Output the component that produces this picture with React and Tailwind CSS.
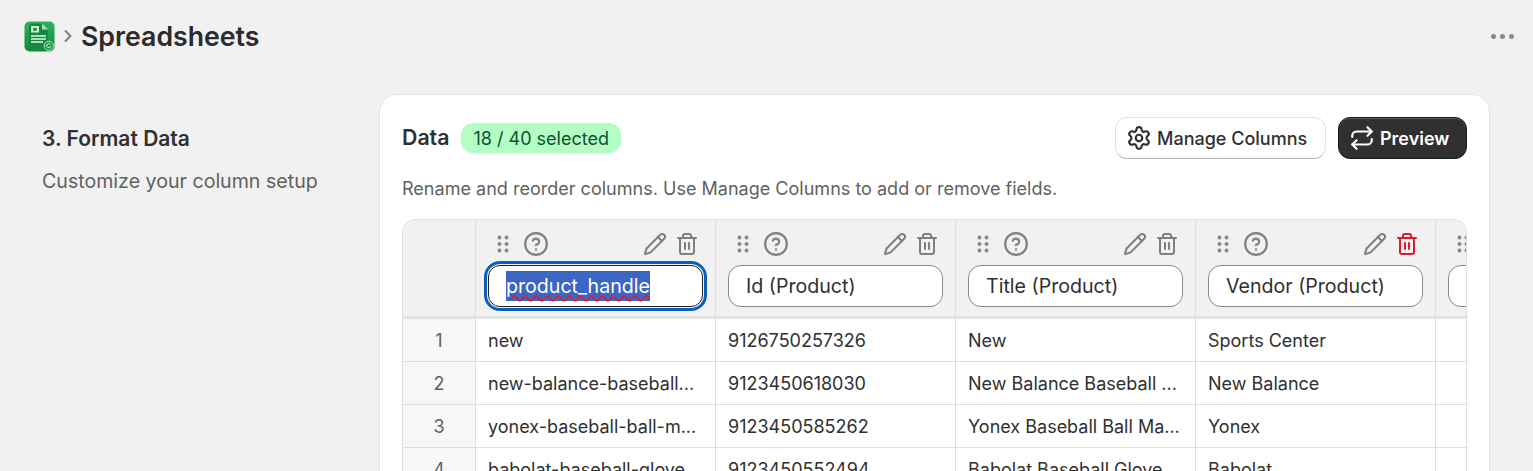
import React from "react";
import { Settings, Repeat, Pencil, Trash2, CircleHelp, ChevronRight } from "lucide-react";

const columns = [
  { label: "product_handle", selected: true, cells: ["new", "new-balance-baseball...", "yonex-baseball-ball-m...", "babolat-baseball-glove..."] },
  { label: "Id (Product)", cells: ["9126750257326", "9123450618030", "9123450585262", "9123450552494"] },
  { label: "Title (Product)", cells: ["New", "New Balance Baseball ...", "Yonex Baseball Ball Ma...", "Babolat Baseball Glove..."] },
  { label: "Vendor (Product)", danger: true, cells: ["Sports Center", "New Balance", "Yonex", "Babolat"] },
  { label: "", cells: ["", "", "", ""] },
];

const Logo = () => (
  <svg width="31" height="31" viewBox="0 0 31 31" className="shrink-0">
    <defs>
      <linearGradient id="logoBg" x1="0" y1="0" x2="0" y2="1">
        <stop offset="0" stopColor="#2fb457" />
        <stop offset="1" stopColor="#128a3c" />
      </linearGradient>
    </defs>
    <rect x="0.5" y="0.5" width="30" height="30" rx="5" fill="url(#logoBg)" />
    <path d="M7 2.5h11l6 6v17a2 2 0 0 1-2 2H7a2 2 0 0 1-2-2v-21a2 2 0 0 1 2-2z" fill="#138a3f" />
    <path d="M18 2.5l6 6h-6z" fill="#a5e0b8" />
    <rect x="7" y="5" width="8" height="6.5" fill="#d8f2e0" />
    <rect x="9.2" y="6.8" width="3.6" height="3" fill="#138a3f" />
    <rect x="7" y="14.2" width="15" height="1.6" fill="#d8f2e0" />
    <rect x="7" y="17.2" width="15" height="1.6" fill="#d8f2e0" />
    <rect x="7" y="20.2" width="12" height="1.6" fill="#d8f2e0" />
    <circle cx="24.8" cy="24.8" r="4.6" fill="#1b9a49" stroke="#bfe8cc" strokeWidth="0.9" />
    <path d="M26.4 23.6a2 2 0 1 0 .3 1.6" fill="none" stroke="#e6f7ec" strokeWidth="0.9" />
  </svg>
);

const Grip = () => (
  <svg width="12" height="18" viewBox="0 0 12 18" fill="#8a8a8a" className="shrink-0">
    <circle cx="2.5" cy="2.5" r="2" />
    <circle cx="9.5" cy="2.5" r="2" />
    <circle cx="2.5" cy="9" r="2" />
    <circle cx="9.5" cy="9" r="2" />
    <circle cx="2.5" cy="15.5" r="2" />
    <circle cx="9.5" cy="15.5" r="2" />
  </svg>
);

const HeaderCell = ({ col }) => (
  <div className="w-[240px] shrink-0 h-[96px] border-r border-[#dedede] px-[12px] pt-[12px]">
    <div className="flex items-center h-[24px] pl-[9px] pr-[4px]">
      <Grip />
      <CircleHelp size={26} strokeWidth={2} className="ml-[14px] text-[#7f7f7f]" />
      <Pencil size={24} strokeWidth={2} className="ml-auto text-[#7f7f7f]" />
      <Trash2 size={24} strokeWidth={2} className={col.danger ? "ml-[8px] text-[#e0192d]" : "ml-[8px] text-[#7f7f7f]"} />
    </div>
    {col.selected ? (
      <div className="mt-[5px] -mx-[4px] h-[50px] rounded-[16px] border-[3px] border-[#0a5fb8] p-px">
        <div className="h-full rounded-[12px] border border-[#222] bg-white pl-[17px] flex items-center">
          <span className="bg-[#3b66c4] text-white text-[19.6px] underline decoration-wavy decoration-[#d3203c] decoration-2 underline-offset-2 leading-[30px]">{col.label}</span>
        </div>
      </div>
    ) : (
      <div className="mt-[9px] h-[42px] rounded-[13px] border border-[#8a8a8a] bg-white pl-[17px] pt-[2px] flex items-center text-[19.6px] text-[#303030]">
        {col.label}
      </div>
    )}
  </div>
);

const App = () => {
  return (
    <div className="h-[471px] w-full overflow-hidden bg-[#f1f1f1] font-['Inter',sans-serif] text-[#303030]">
      {/* Page title */}
      <div className="flex items-center h-[72px] pl-[24px] pr-[19px]">
        <Logo />
        <ChevronRight size={20} strokeWidth={2.4} className="ml-[3px] text-[#808080]" />
        <h1 className="ml-[3px] text-[26.7px] font-semibold text-[#2b2b2b]">Spreadsheets</h1>
        <div className="ml-auto flex gap-[4px]">
          <span className="w-[5px] h-[5px] rounded-full bg-[#8a8a8a]" />
          <span className="w-[5px] h-[5px] rounded-full bg-[#8a8a8a]" />
          <span className="w-[5px] h-[5px] rounded-full bg-[#8a8a8a]" />
        </div>
      </div>

      <div className="flex items-start pt-[22px] pl-[42px] pr-[43px]">
        {/* Step description */}
        <div className="w-[337px] shrink-0 pt-[31px]">
          <h2 className="text-[21px] leading-[28px] font-semibold">3. Format Data</h2>
          <p className="mt-[15px] text-[19.6px] leading-[26px] text-[#616161]">Customize your column setup</p>
        </div>

        {/* Data card */}
        <div className="flex-1 min-w-0 bg-white rounded-[18px] border border-[#e3e3e3] pt-[22px] px-[22px] h-[400px]">
          <div className="flex items-center h-[42px]">
            <span className="text-[21.3px] font-semibold">Data</span>
            <span className="ml-[12px] h-[30px] px-[12px] rounded-[12px] bg-[#b4fec5] text-[#0c5132] text-[18px] flex items-center">18 / 40 selected</span>
            <button className="ml-auto h-[42px] w-[211px] rounded-[12px] border border-[#e3e3e3] border-b-[#b5b5b5] bg-white flex items-center pl-[10px] gap-[5px] text-[18px] font-medium">
              <Settings size={26} strokeWidth={2} />
              Manage Columns
            </button>
            <button className="ml-[12px] h-[42px] w-[129px] rounded-[12px] bg-[#303030] border border-[#1a1a1a] shadow-[inset_0_1px_0_rgba(255,255,255,0.2)] text-white flex items-center pl-[10px] gap-[5px] text-[18px] font-semibold">
              <Repeat size={26} strokeWidth={2} />
              Preview
            </button>
          </div>
          <p className="mt-[18px] text-[18.05px] leading-[24px] text-[#616161]">Rename and reorder columns. Use Manage Columns to add or remove fields.</p>

          {/* Table */}
          <div className="mt-[18px] rounded-t-[14px] border border-b-0 border-[#dedede] overflow-hidden text-[18px]">
            <div className="flex bg-[#f1f1f1] border-b-[3px] border-[#e3e3e3]">
              <div className="w-[73px] shrink-0 border-r border-[#dedede]" />
              {columns.map((col, i) => (
                <HeaderCell key={i} col={col} />
              ))}
            </div>
            {[0, 1, 2, 3].map((r) => (
              <div key={r} className="flex h-[43px] border-b border-[#dedede]">
                <div className="w-[73px] shrink-0 border-r border-[#dedede] bg-[#f7f7f7] flex items-center justify-center text-[#616161]">{r + 1}</div>
                {columns.map((col, i) => (
                  <div key={i} className="w-[240px] shrink-0 border-r border-[#dedede] px-[12px] flex items-center whitespace-nowrap overflow-hidden">
                    {col.cells[r]}
                  </div>
                ))}
              </div>
            ))}
          </div>
        </div>
      </div>
    </div>
  );
};

export default App;
